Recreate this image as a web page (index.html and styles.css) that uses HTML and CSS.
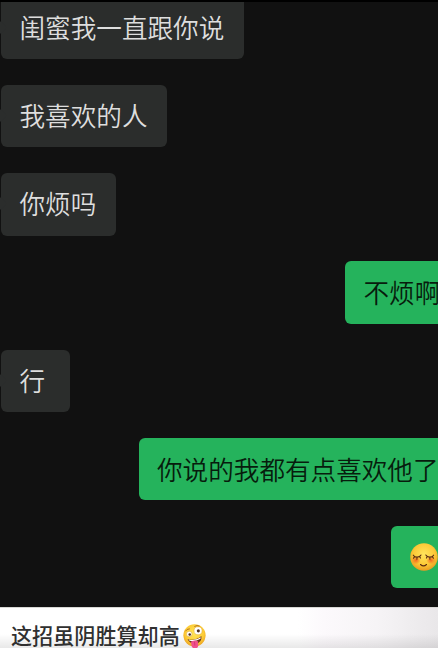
FILE: index.html
```html
<!DOCTYPE html>
<html lang="zh-CN">
<head>
<meta charset="utf-8">
<title>聊天</title>
<link rel="stylesheet" href="styles.css">
</head>
<body>
<main class="chat">
  <div class="bubble in">闺蜜我一直跟你说</div>
  <div class="bubble in">我喜欢的人</div>
  <div class="bubble in">你烦吗</div>
  <div class="bubble out out-short">不烦啊</div>
  <div class="bubble in">行</div>
  <div class="bubble out out-long">你说的我都有点喜欢他了</div>
  <div class="bubble out out-emoji">
    <svg class="shy" viewBox="0 0 28 28" role="img" aria-label="害羞">
      <defs>
        <radialGradient id="shyFace" cx=".5" cy=".4" r=".6"><stop offset="0" stop-color="#ffe45c"/><stop offset=".65" stop-color="#fcc936"/><stop offset="1" stop-color="#e99a20"/></radialGradient>
        <radialGradient id="blush"><stop offset="0" stop-color="#f4631e" stop-opacity=".95"/><stop offset="1" stop-color="#f4631e" stop-opacity="0"/></radialGradient>
      </defs>
      <circle cx="14" cy="14" r="13.8" fill="url(#shyFace)"/>
      <ellipse cx="6" cy="17.3" rx="4.6" ry="4" fill="url(#blush)"/>
      <ellipse cx="21" cy="17.3" rx="4.6" ry="4" fill="url(#blush)"/>
      <g fill="none" stroke="#5c2c12" stroke-width="1.1" stroke-linecap="round">
        <path d="M3.3 12.2Q4.5 14.2 7.2 14.1Q10 14 11 12M4.5 13.6l-1 1.6M7 14.2l-.1 2M9.6 13.6l.8 1.5"/>
        <path d="M15.8 12Q17 14 19.6 14.1Q22.4 14.2 23.6 12.2M17.2 13.6l-.8 1.5M19.8 14.2l.1 2M22.4 13.6l1 1.6"/>
        <path d="M10.5 21.5Q13.5 24.3 16.5 21.5"/>
      </g>
    </svg>
  </div>
</main>
<footer class="caption">
  <span class="caption-text">这招虽阴胜算却高</span>
  <svg class="zany" viewBox="0 0 24 26" role="img" aria-label="搞怪">
    <defs><radialGradient id="zanyFace" cx=".5" cy=".4" r=".6"><stop offset="0" stop-color="#ffe65a"/><stop offset=".7" stop-color="#fdcb35"/><stop offset="1" stop-color="#eba122"/></radialGradient></defs>
    <circle cx="12" cy="11.8" r="11.6" fill="url(#zanyFace)"/>
    <path d="M4.7 15.5Q12 18.5 19.2 12.5Q20 19.3 13.4 20.5Q7.2 21 4.7 15.5Z" fill="#6b3217"/>
    <path d="M5.8 16Q12 18.3 18.5 13.8L18.3 15.3Q12 19 6.5 17.3Z" fill="#fff"/>
    <path d="M8.3 18.5Q12 16.2 15.4 17.6L15.9 21.7Q15.8 25.6 12.7 25.7Q9.6 25.6 8.9 22.6Z" fill="#f0508c"/>
    <path d="M12 18.5l.4 4" stroke="#cf2f6c" stroke-width=".8"/>
    <circle cx="15.7" cy="7" r="4.2" fill="#fff" stroke="#dba12a" stroke-width=".5"/>
    <circle cx="16" cy="7.1" r="1.6" fill="#4b2a18"/>
    <circle cx="6.5" cy="10.4" r="2.9" fill="#fff" stroke="#dba12a" stroke-width=".5"/>
    <circle cx="7" cy="10.8" r="1.3" fill="#4b2a18"/>
    <path d="M2.7 7.2Q4 5 6.7 5M12.2 2.4Q14.5 .8 17 2" fill="none" stroke="#a96518" stroke-width=".9" stroke-linecap="round"/>
  </svg>
</footer>
</body>
</html>
```
FILE: styles.css
```css
* { box-sizing: border-box; }

body {
  margin: 0;
  width: 438px;
  height: 648px;
  overflow: hidden;
  background: #111;
  font-family: "Noto Sans CJK SC", sans-serif;
}

.chat {
  display: flex;
  flex-direction: column;
  align-items: flex-start;
  gap: 25.85px;
  height: 607px;
  padding-left: 1px;
  border-top: 2px solid #000;
  background: #111;
  overflow: hidden;
}

.bubble {
  position: relative;
  flex: none;
  height: 62.3px;
  min-width: 69px;
  padding: 0 19.5px 0 18.5px;
  border-radius: 6px;
  font-size: 25.6px;
  line-height: 60.5px;
  font-weight: 350;
  white-space: nowrap;
}

.bubble:first-child { margin-top: -5px; }

.in {
  background: #2b2d2c;
  color: #dedede;
}

.in::before {
  content: "";
  position: absolute;
  left: -5px;
  top: 26px;
  width: 9px;
  height: 9px;
  background: #2b2d2c;
  transform: rotate(45deg);
}

.out {
  align-self: flex-end;
  border-radius: 6px 0 0 6px;
  background: #25b35c;
  color: #071c0d;
  line-height: 62px;
}

.out-short { width: 93px; padding-right: 0; }
.out-long { width: 299.5px; padding-right: 0; }

.out-emoji {
  display: flex;
  align-items: center;
  width: 47.5px;
  min-width: 0;
  padding: 0 0 0 19.5px;
}

.shy {
  flex: none;
  width: 28px;
  height: 28px;
}

.caption {
  display: flex;
  align-items: flex-start;
  height: 41px;
  padding-left: 11px;
  border-top: 1px solid #d8d8d5;
  background:
    linear-gradient(to bottom, transparent 65%, rgba(0, 0, 0, .09)),
    linear-gradient(to right, #fff 68%, #fcf9fc 74%, #f6f4f6 86%, #e9e7e9);
}

.caption-text {
  margin-top: 15px;
  font-size: 21.1px;
  line-height: 25px;
  font-weight: 500;
  color: #303030;
  white-space: nowrap;
}

.zany {
  flex: none;
  width: 23px;
  height: 25px;
  margin: 16px 0 0 3px;
}
```
